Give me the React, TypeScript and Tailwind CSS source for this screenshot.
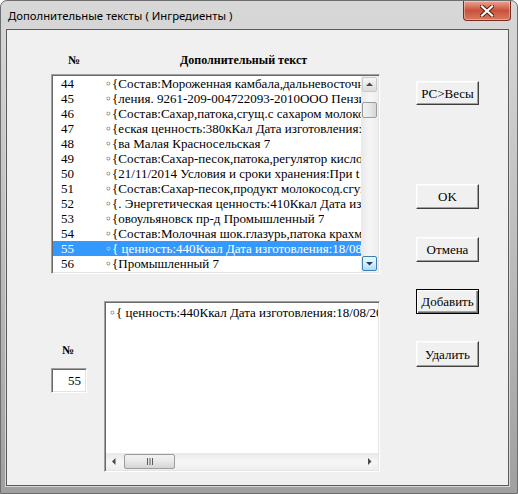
import React from "react";

const serif = "font-['Liberation_Serif','Times_New_Roman',serif]";

const rows: [string, string][] = [
  ["44", "{Состав:Мороженная камбала,дальневосточная, соль"],
  ["45", "{ления. 9261-209-004722093-2010ООО Пензинский"],
  ["46", "{Состав:Сахар,патока,сгущ.с сахаром молоко цельное"],
  ["47", "{еская ценность:380кКал Дата изготовления:12/11"],
  ["48", "{ва Малая Красносельская 7"],
  ["49", "{Состав:Сахар-песок,патока,регулятор кислотности"],
  ["50", "{21/11/2014 Условия и сроки хранения:При t +18"],
  ["51", "{Состав:Сахар-песок,продукт молокосод.сгущ."],
  ["52", "{. Энергетическая ценность:410Ккал Дата изготовления"],
  ["53", "{овоульяновск пр-д Промышленный 7"],
  ["54", "{Состав:Молочная шок.глазурь,патока крахмальная"],
  ["55", "{ ценность:440Ккал Дата изготовления:18/08/2014"],
  ["56", "{Промышленный 7"],
  ["57", "{Молочная шок.глазурь 10% Состав:Патока"],
];

const sunken =
  "border border-t-[#a0a0a0] border-l-[#a0a0a0] border-r-white border-b-white shadow-[inset_1px_1px_0_#696969,inset_-1px_-1px_0_#e3e3e3]";

function Mark() {
  return <span className="font-['DejaVu_Sans',sans-serif] text-[12px]">◦</span>;
}

function Arrow({ dir, hot }: { dir: "up" | "down" | "left" | "right"; hot?: boolean }) {
  const d = {
    up: "M1 5 L4.5 1.5 L8 5 Z",
    down: "M1 2 L4.5 5.5 L8 2 Z",
    left: "M5.5 1 L2 4.5 L5.5 8 Z",
    right: "M3 1 L6.5 4.5 L3 8 Z",
  }[dir];
  const vertical = dir === "up" || dir === "down";
  return (
    <svg width="9" height={vertical ? 7 : 9} viewBox={vertical ? "0 0 9 7" : "0 0 9 9"}>
      <path d={d} fill={hot ? "#1e3f66" : "#4a4a4a"} />
    </svg>
  );
}

function ScrollButton({ dir, hot }: { dir: "up" | "down" | "left" | "right"; hot?: boolean }) {
  return (
    <div className="flex h-[17px] w-[17px] shrink-0 items-center justify-center p-[1px]">
      <div
        className={
          hot
            ? "flex h-full w-full items-center justify-center rounded-[2px] border border-[#3c7fb1] bg-gradient-to-b from-[#eaf6fd] via-[#d9f0fc] to-[#a7d9f5]"
            : "flex h-full w-full items-center justify-center rounded-[2px] border border-transparent"
        }
      >
        <Arrow dir={dir} hot={hot} />
      </div>
    </div>
  );
}

function Button({ label, isDefault, h }: { label: string; isDefault?: boolean; h: string }) {
  return (
    <button
      type="button"
      className={`${h} w-[63px] shrink-0 ${
        isDefault
          ? "border border-black shadow-[inset_1px_1px_0_#fff,inset_-1px_-1px_0_#696969,inset_-2px_-2px_0_#a0a0a0]"
          : "border border-t-white border-l-white border-r-[#404040] border-b-[#404040] shadow-[inset_-1px_-1px_0_#a0a0a0,inset_1px_1px_0_#f8f8f8]"
      } bg-[#f0f0f0] text-[13px] leading-none text-black ${serif}`}
    >
      {label}
    </button>
  );
}

export default function App() {
  return (
    <div className="relative h-[494px] w-[518px] overflow-hidden rounded-t-[7px] border border-[#6e6e6e] bg-gradient-to-b from-[#d8d8d8] via-[#bdbdbd] to-[#a0a0a0]">
      {/* title bar */}
      <div className="flex h-[28px] items-start pl-[7px] pr-[6px]">
        <span className="mt-[7px] font-['Noto_Sans','Open_Sans',sans-serif] text-[11.3px] leading-[16px] text-black">
          Дополнительные тексты ( Ингредиенты )
        </span>
        <div className="ml-auto flex h-[20px] w-[48px] items-center justify-center rounded-b-[4px] border border-t-0 border-[#7a2a1e] bg-gradient-to-b from-[#e9a594] via-[#c9503a] to-[#d87a5e] shadow-[inset_0_0_0_1px_rgba(255,255,255,0.35)]">
          <svg width="14" height="12" viewBox="0 0 14 12">
            <path
              d="M2 1.5 L12 10.5 M12 1.5 L2 10.5"
              stroke="#5a1a10"
              strokeWidth="4"
              strokeLinecap="square"
            />
            <path
              d="M2 1.5 L12 10.5 M12 1.5 L2 10.5"
              stroke="#ffffff"
              strokeWidth="2.2"
              strokeLinecap="square"
            />
          </svg>
        </div>
      </div>

      {/* client area */}
      <div className="mx-[5px] h-[457px] w-[503px] border border-[#5a5a5a] bg-[#f0f0f0] shadow-[0_0_0_1px_#d8d8d8]">
        <div className={`flex pl-[44px] ${serif} text-[13px] leading-[15px] text-black`}>
          <div className="flex w-[329px] flex-col">
            <div className="flex h-[44px] pt-[23px] text-[12px] font-bold">
              <span className="ml-[17px] w-[14px]">№</span>
              <span className="ml-[98px]">Дополнительный текст</span>
            </div>

            {/* list box */}
            <div className={`flex h-[200px] bg-white p-[1px] ${sunken}`}>
              <div className="flex-1 overflow-hidden">
                {rows.map(([n, t]) => {
                  const sel = n === "55";
                  return (
                    <div
                      key={n}
                      className={`flex h-[15px] whitespace-nowrap ${sel ? "bg-[#3399ff] text-white" : ""}`}
                    >
                      <span className="w-[52px] shrink-0 pl-[8px]">{n}</span>
                      <span className="overflow-hidden">
                        <Mark />
                        {t}
                      </span>
                    </div>
                  );
                })}
              </div>
              <div className="flex w-[17px] flex-col bg-gradient-to-r from-[#e8e8e8] via-[#f6f6f6] to-[#eeeeee]">
                <div className="flex h-[17px] w-[17px] items-center justify-center p-[1px]">
                  <div className="flex h-full w-full items-center justify-center rounded-[2px] border border-[#c9c9c9] bg-gradient-to-b from-[#f6f6f6] to-[#dcdcdc]">
                    <Arrow dir="up" />
                  </div>
                </div>
                <div className="mx-[1px] mt-[9px] h-[16px] rounded-[2px] border border-[#9c9c9c] bg-gradient-to-r from-[#f2f2f2] via-[#e8e8e8] to-[#d6d6d6]" />
                <div className="flex-1" />
                <ScrollButton dir="down" hot />
              </div>
            </div>

            {/* lower part */}
            <div className="mt-[27px] flex">
              <div className="flex w-[53px] shrink-0 flex-col">
                <span className="ml-[11px] mt-[42px] text-[12px] font-bold">№</span>
                <div
                  className={`mt-[10px] flex h-[25px] w-[36px] items-center justify-end bg-white pr-[5px] ${sunken}`}
                >
                  55
                </div>
              </div>
              <div className={`flex h-[171px] w-[276px] flex-col bg-white p-[1px] ${sunken}`}>
                <div className="flex-1 overflow-hidden whitespace-nowrap px-[3px] pt-[2px]">
                  <Mark />
                  {"{ ценность:440Ккал Дата изготовления:18/08/2014"}
                </div>
                <div className="flex h-[17px] shrink-0 items-center bg-gradient-to-b from-[#e8e8e8] via-[#f6f6f6] to-[#eeeeee]">
                  <ScrollButton dir="left" />
                  <div className="ml-[1px] flex h-[15px] w-[51px] items-center justify-center rounded-[2px] border border-[#9c9c9c] bg-gradient-to-b from-[#f2f2f2] via-[#e8e8e8] to-[#d4d4d4]">
                    <svg width="8" height="7" viewBox="0 0 8 7">
                      <path d="M1.5 0 V7 M4 0 V7 M6.5 0 V7" stroke="#5a5a5a" strokeWidth="1" />
                    </svg>
                  </div>
                  <div className="flex-1" />
                  <ScrollButton dir="right" />
                </div>
              </div>
            </div>
          </div>

          {/* buttons */}
          <div className="ml-[36px] flex flex-col pt-[51px]">
            <Button label="РС>Весы" h="h-[24px]" />
            <div className="h-[79px]" />
            <Button label="OK" h="h-[25px]" />
            <div className="h-[28px]" />
            <Button label="Отмена" h="h-[25px]" />
            <div className="h-[27px]" />
            <Button label="Добавить" h="h-[25px]" isDefault />
            <div className="h-[27px]" />
            <Button label="Удалить" h="h-[26px]" />
          </div>
        </div>
      </div>
    </div>
  );
}
